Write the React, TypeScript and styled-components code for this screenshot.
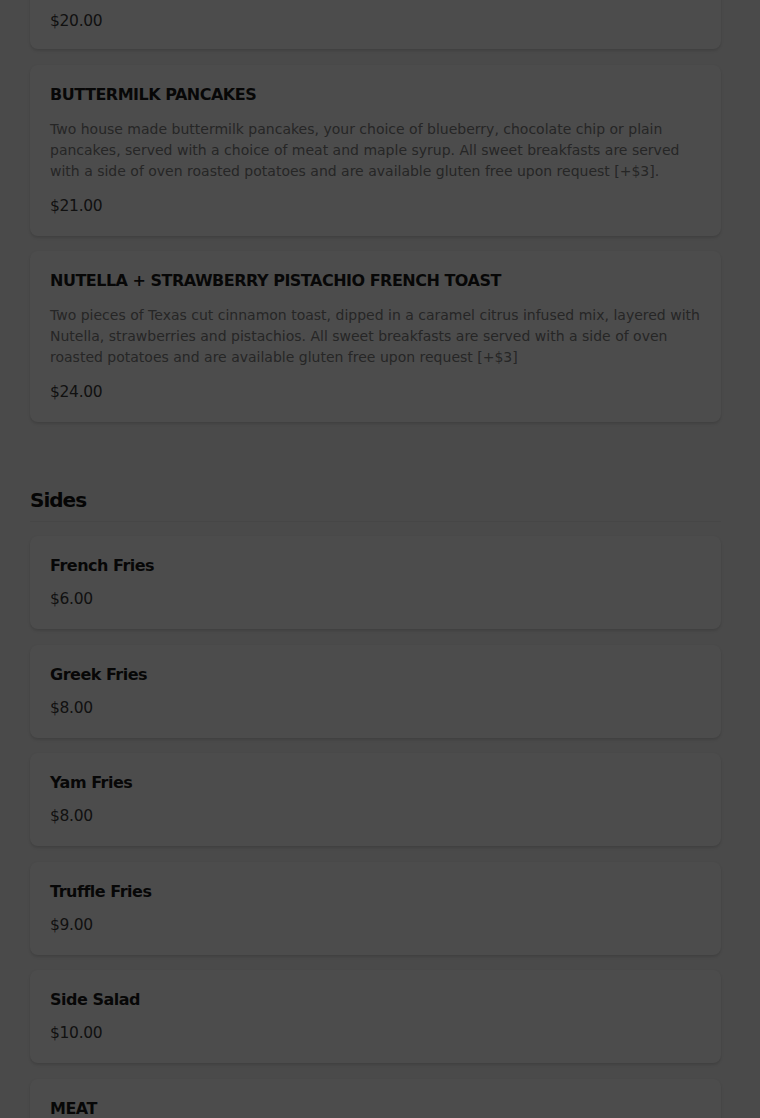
import styled, { createGlobalStyle } from "styled-components";

const Global = createGlobalStyle`
  body {
    margin: 0;
    background: #f7f7f7;
    font-family: "DejaVu Sans", "Open Sans", sans-serif;
  }
`;

const Page = styled.div`
  padding: 0 39px 40px 30px;
`;

const Section = styled.section`
  margin-bottom: 66px;
`;

const SectionTitle = styled.h2`
  margin: 0 0 14px;
  padding-bottom: 9px;
  font-size: 20px;
  line-height: 24px;
  letter-spacing: -1px;
  font-weight: 700;
  color: #111;
  border-bottom: 1px solid #ececec;
`;

// $clipped: the card above the fold, scrolled mostly out of view
const Card = styled.div<{ $clipped?: boolean }>`
  background: #fff;
  border-radius: 8px;
  padding: ${(p) => (p.$clipped ? "22px 20px 18px" : "20px")};
  margin-top: ${(p) => (p.$clipped ? "-10px" : "0")};
  margin-bottom: 15.5px;
  box-shadow: 0 2px 3px rgba(0, 0, 0, 0.12), 0 0 2px rgba(0, 0, 0, 0.05);
`;

const ItemName = styled.h3`
  margin: 0 0 15px;
  font-size: 16px;
  line-height: 19px;
  letter-spacing: -0.5px;
  font-weight: 700;
  color: #1a1a1a;
`;

const Desc = styled.p`
  margin: 0 0 15px;
  font-size: 14px;
  line-height: 21px;
  color: #808080;
`;

const Price = styled.div`
  font-size: 15.5px;
  line-height: 19px;
  letter-spacing: -0.3px;
  color: #3a3a3a;
`;

const Overlay = styled.div`
  position: fixed;
  inset: 0;
  background: rgba(0, 0, 0, 0.7);
`;

type Item = { name: string; desc?: string; price: string };

const breakfast: Item[] = [
  {
    name: "BUTTERMILK PANCAKES",
    desc: "Two house made buttermilk pancakes, your choice of blueberry, chocolate chip or plain pancakes, served with a choice of meat and maple syrup. All sweet breakfasts are served with a side of oven roasted potatoes and are available gluten free upon request [+$3].",
    price: "$21.00",
  },
  {
    name: "NUTELLA + STRAWBERRY PISTACHIO FRENCH TOAST",
    desc: "Two pieces of Texas cut cinnamon toast, dipped in a caramel citrus infused mix, layered with Nutella, strawberries and pistachios. All sweet breakfasts are served with a side of oven roasted potatoes and are available gluten free upon request [+$3]",
    price: "$24.00",
  },
];

const sides: Item[] = [
  { name: "French Fries", price: "$6.00" },
  { name: "Greek Fries", price: "$8.00" },
  { name: "Yam Fries", price: "$8.00" },
  { name: "Truffle Fries", price: "$9.00" },
  { name: "Side Salad", price: "$10.00" },
  { name: "MEAT", price: "$5.00" },
];

function MenuCard({ item }: { item: Item }) {
  return (
    <Card>
      <ItemName>{item.name}</ItemName>
      {item.desc && <Desc>{item.desc}</Desc>}
      <Price>{item.price}</Price>
    </Card>
  );
}

export default function App() {
  return (
    <>
      <Global />
      <Page>
        <Section>
          <Card $clipped>
            <Price>$20.00</Price>
          </Card>
          {breakfast.map((it) => (
            <MenuCard key={it.name} item={it} />
          ))}
        </Section>
        <Section>
          <SectionTitle>Sides</SectionTitle>
          {sides.map((it) => (
            <MenuCard key={it.name} item={it} />
          ))}
        </Section>
      </Page>
      <Overlay />
    </>
  );
}
